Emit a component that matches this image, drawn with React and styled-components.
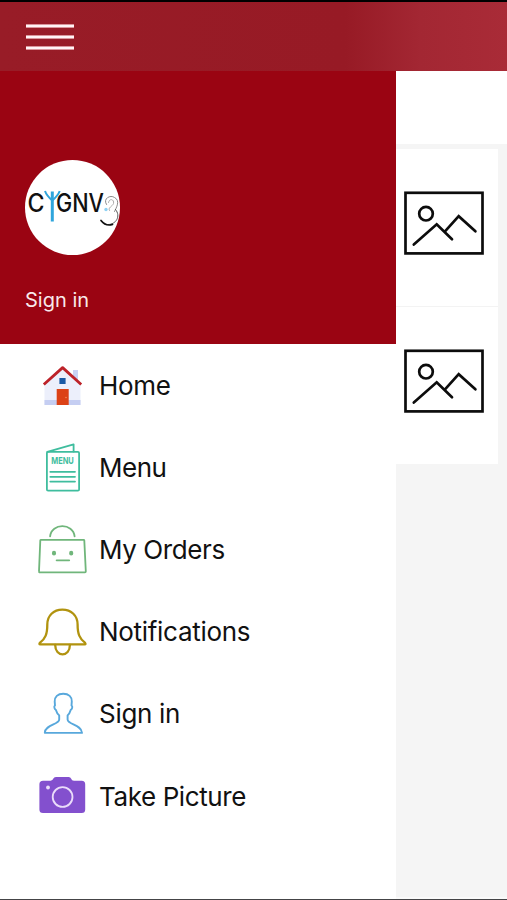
import React from 'react';
import styled, { createGlobalStyle } from 'styled-components';

const GlobalStyle = createGlobalStyle`
  * {
    box-sizing: border-box;
  }
  body {
    margin: 0;
    background: #ffffff;
    font-family: Inter, 'Liberation Sans', sans-serif;
  }
`;

const Screen = styled.div`
  display: flex;
  flex-direction: column;
  width: 507px;
  height: 900px;
  border-top: 2px solid #000000;
  border-bottom: 1px solid #444446;
  overflow: hidden;
`;

const TopBar = styled.header`
  display: flex;
  align-items: center;
  flex: none;
  height: 69px;
  padding: 1px 0 0 26px;
  background: linear-gradient(90deg, #981c27 0%, #971a25 68%, #a32733 83%, #a92b37 100%);
`;

const MenuButton = styled.button`
  display: flex;
  flex-direction: column;
  gap: 7px;
  padding: 0;
  border: none;
  background: none;
  cursor: pointer;
`;

const MenuLine = styled.span`
  width: 48px;
  height: 4px;
  background: #fff4f5;
  border: solid #d9959b;
  border-width: 0.5px 0;
`;

const Body = styled.div`
  display: flex;
  flex: 1;
  min-height: 0;
`;

const Drawer = styled.nav`
  width: 396px;
  background: #ffffff;
`;

const Profile = styled.div`
  display: flex;
  flex-direction: column;
  height: 273px;
  padding: 88.5px 0 0 24.5px;
  background: #9a0412;
`;

const Avatar = styled.div`
  width: 95px;
  height: 95px;
  border-radius: 50%;
  background: #ffffff;
  overflow: hidden;
`;

const ProfileLabel = styled.p`
  margin: 33.5px 0 0 0.5px;
  font-size: 20px;
  line-height: 24px;
  color: #f8e9ea;
`;

const MenuList = styled.ul`
  display: flex;
  flex-direction: column;
  margin: 0;
  padding: 1px 0 0;
  list-style: none;
`;

const MenuItem = styled.li`
  display: flex;
  align-items: center;
  height: 82.2px;
  padding-left: 38px;
  gap: 13px;
  cursor: pointer;
`;

const MenuIcon = styled.svg`
  flex: none;
  width: 48px;
  height: 48px;
  overflow: visible;
  fill: none;
  stroke: ${({ $color }) => $color || 'none'};
  stroke-width: ${({ $weight }) => $weight || 1.8};
  stroke-linecap: round;
  stroke-linejoin: round;
`;

const MenuLabel = styled.span`
  padding-bottom: 2px;
  font-size: 26px;
  letter-spacing: ${({ $spacing }) => $spacing || 0}px;
  color: #111111;
  white-space: nowrap;
`;

const Content = styled.main`
  display: flex;
  flex-direction: column;
  flex: 1;
  background: #f5f5f5;
  border-bottom: 2px solid #fafafa;
`;

const SearchArea = styled.div`
  height: 73px;
  background: #ffffff;
`;

const CardList = styled.div`
  margin: 5px 9px 0 0;
  background: #ffffff;
`;

const Card = styled.div`
  height: ${({ $last }) => ($last ? 157 : 158)}px;
  padding: 42px 0 0 8px;
  border-bottom: ${({ $last }) => ($last ? 'none' : '1px solid #f3f3f3')};
`;

const Placeholder = styled.svg`
  display: block;
  width: 80px;
  height: 64px;
  fill: none;
  stroke: #0c0c0c;
  stroke-width: 2.7;
  stroke-linecap: round;
`;

const HomeIcon = () => (
  <MenuIcon viewBox="0 0 48 48">
    <rect x="35" y="8" width="5" height="13" fill="#c9d2f4" />
    <path d="M6.5 22 L24.7 6 L42.5 22 V43 H6.5Z" fill="#eceffb" />
    <rect x="6.5" y="38" width="36" height="5" fill="#c5cef2" />
    <rect x="18.7" y="27" width="12" height="16" fill="#dc4216" />
    <circle cx="28" cy="35.5" r="0.7" fill="#f29a62" />
    <rect x="21.4" y="16" width="6.2" height="6" fill="#1b5aa5" />
    <path d="M5.8 22.5 L24.6 5.6 L43.2 22.5" stroke="#bd2229" strokeWidth="2.8" strokeLinecap="butt" />
  </MenuIcon>
);

const MenuCardIcon = () => (
  <MenuIcon viewBox="0 0 48 48" $color="#3fbd9e" $weight={1.8}>
    <rect x="8.9" y="7.8" width="32.2" height="38.9" rx="1.2" />
    <path d="M9.3 7.8 L35.6 0.3 V7.5" />
    <path d="M12.3 27.8 H37 M12.3 32.8 H37 M12.3 37.6 H37" />
    <text
      x="13.2"
      y="20.3"
      textLength="22.6"
      lengthAdjust="spacingAndGlyphs"
      fontSize="9.6"
      fontWeight="700"
      fill="#3fbd9e"
      stroke="none"
    >
      MENU
    </text>
  </MenuIcon>
);

const BagIcon = () => (
  <MenuIcon viewBox="0 0 48 48" $color="#70b67b">
    <path d="M3 13.8 H45.7 Q46.2 13.8 46.3 14.4 L47.8 45.4 Q47.8 46.3 47 46.3 H1.8 Q0.9 46.3 1 45.4 L2.3 14.4 Q2.4 13.8 3 13.8Z" />
    <path d="M12.1 10.4 C13.5 -3.2 35.2 -3.2 36.6 10.4" />
    <path d="M18.6 34.3 H31.2" />
    <ellipse cx="16" cy="27.2" rx="1.2" ry="1.5" fill="#70b67b" />
    <ellipse cx="33.2" cy="27.2" rx="1.2" ry="1.5" fill="#70b67b" />
  </MenuIcon>
);

const BellIcon = () => (
  <MenuIcon viewBox="0 0 48 48" $color="#b1930f" $weight={2.3}>
    <path d="M24.4 0.6 C15.5 0.6 9.3 6.7 9.3 15.5 C9.3 25 7.4 29.6 2.1 33.6 Q0.6 35.4 2.4 35.4 H46.6 Q48.3 35.4 46.9 33.6 C41.6 29.6 39.6 25 39.6 15.5 C39.6 6.7 33.3 0.6 24.4 0.6Z" />
    <path d="M17.2 36 C17.2 48.5 31.9 48.5 31.9 36" />
  </MenuIcon>
);

const PersonIcon = () => (
  <MenuIcon viewBox="0 0 48 48" $color="#58a8dc" $weight={1.9}>
    <path d="M25.2 2.7 C19.6 2.7 16.6 5.8 16.7 10.4 L17 14.6 Q15.9 15 16.4 16.8 Q16.8 18.5 17.9 18.9 Q18.9 22.3 21.2 24.4 V28.5 C21.2 33.7 7.1 33.5 6.8 41.9 H44 C43.5 33.5 29.6 33.7 29.6 28.5 V24.4 Q31.7 22.3 32.7 18.9 Q33.8 18.5 34.2 16.8 Q34.6 15 33.5 14.6 L33.8 10.4 C33.9 5.8 30.9 2.7 25.2 2.7Z" />
  </MenuIcon>
);

const CameraIcon = () => (
  <MenuIcon viewBox="0 0 48 48">
    <path
      d="M5 7.8 H12.6 Q14.8 7.5 15.2 5.8 Q15.8 4 18 4 H30.6 Q32.6 4 33.2 5.8 Q33.7 7.8 36 7.8 H43.7 Q47.2 7.8 47.2 11.3 V36.5 Q47.2 40 43.7 40 H5 Q1.4 40 1.4 36.5 V11.3 Q1.4 7.8 5 7.8Z"
      fill="#8350ce"
    />
    <circle cx="24.6" cy="24" r="9.9" stroke="#eadcfa" strokeWidth="1.8" />
    <circle cx="10" cy="14.5" r="1.9" fill="#eadcfa" />
  </MenuIcon>
);

const Logo = () => (
  <svg width="95" height="95" viewBox="0.5 0.5 95 95" fontFamily="Inter, sans-serif" fontWeight="500">
    <text x="3" y="52.5" fontSize="25" textLength="17" lengthAdjust="spacingAndGlyphs" fill="#111111">
      C
    </text>
    <text x="31.5" y="52.5" fontSize="25" textLength="48" lengthAdjust="spacingAndGlyphs" fill="#111111">
      GNV
    </text>
    <g fill="none" stroke="#2fa5dc" strokeWidth="2">
      <path d="M27.8 32 V62" strokeWidth="3" />
      <path d="M20.5 31.5 Q22 36 27.8 41 Q33.6 36 35.2 31.5" />
    </g>
    <g fill="none" stroke="#555555" strokeWidth="1" strokeLinecap="round">
      <path d="M82 45 C78 39 86 35 90 38 C96 41 92 48 90 52" stroke="#8a8a8a" />
      <path d="M84 43 C85 38 90 40 89 44 C88 47 83 48 85 51" stroke="#aaaaaa" />
      <path d="M91 50 C97 57 91 65 84 65" />
      <path d="M88 65 Q81 67 76.5 61" stroke="#111111" strokeWidth="1.7" />
    </g>
    <circle cx="81.5" cy="50" r="1.7" fill="#8fd2f4" />
  </svg>
);

const PlaceholderImage = () => (
  <Placeholder viewBox="0 0 80 64">
    <rect x="1.5" y="1.8" width="77" height="60.6" />
    <circle cx="22" cy="22.7" r="6.8" />
    <path d="M9.8 53.6 L32.7 33.3 L48 48.3" />
    <path d="M41 40.3 L54.7 25.2 L71.4 40.3" />
  </Placeholder>
);

const items = [
  { label: 'Home', Icon: HomeIcon, spacing: -0.3 },
  { label: 'Menu', Icon: MenuCardIcon, spacing: -0.5 },
  { label: 'My Orders', Icon: BagIcon, spacing: -0.4 },
  { label: 'Notifications', Icon: BellIcon, spacing: -0.3 },
  { label: 'Sign in', Icon: PersonIcon, spacing: -0.3 },
  { label: 'Take Picture', Icon: CameraIcon, spacing: -0.4 },
];

const App = () => {
  return (
    <>
      <GlobalStyle />
      <Screen>
        <TopBar>
          <MenuButton aria-label="menu">
            <MenuLine />
            <MenuLine />
            <MenuLine />
          </MenuButton>
        </TopBar>
        <Body>
          <Drawer>
            <Profile>
              <Avatar>
                <Logo />
              </Avatar>
              <ProfileLabel>Sign in</ProfileLabel>
            </Profile>
            <MenuList>
              {items.map(({ label, Icon, spacing }) => (
                <MenuItem key={label}>
                  <Icon />
                  <MenuLabel $spacing={spacing}>{label}</MenuLabel>
                </MenuItem>
              ))}
            </MenuList>
          </Drawer>
          <Content>
            <SearchArea />
            <CardList>
              <Card>
                <PlaceholderImage />
              </Card>
              <Card $last>
                <PlaceholderImage />
              </Card>
            </CardList>
          </Content>
        </Body>
      </Screen>
    </>
  );
};

export default App;
